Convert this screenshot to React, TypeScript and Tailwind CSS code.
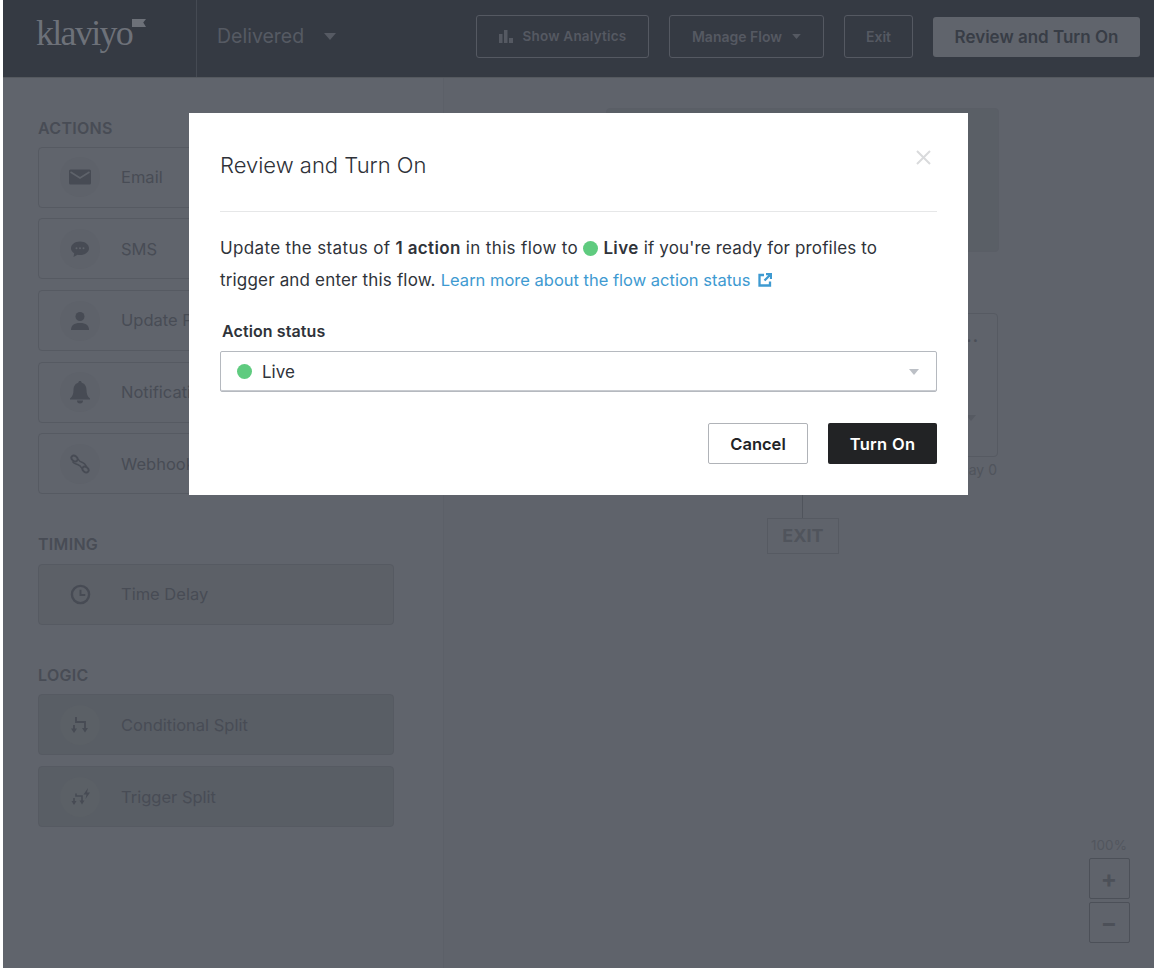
import React from "react";

function Mail() {
  return (
    <svg width="22" height="16" viewBox="0 0 22 16">
      <rect x="0" y="0.500" width="22" height="15" rx="1.500" fill="#474b54" />
      <path d="M1.500 3 L11 9 L20.500 3" fill="none" stroke="#5f636b" strokeWidth="1.600" />
    </svg>
  );
}
function Chat() {
  return (
    <svg width="20" height="20" viewBox="0 0 20 20">
      <path d="M10 2.500c5 0 9 2.900 9 6.800s-4 6.800-9 6.800c-.9 0-1.700-.1-2.500-.3L3.500 18l.7-3.700C2.200 13 1 11.300 1 9.300 1 5.400 5 2.500 10 2.500z" fill="#474b54" />
      <circle cx="6.500" cy="9.300" r="1" fill="#5f636b" />
      <circle cx="10" cy="9.300" r="1" fill="#5f636b" />
      <circle cx="13.500" cy="9.300" r="1" fill="#5f636b" />
    </svg>
  );
}
function User() {
  return (
    <svg width="20" height="20" viewBox="0 0 20 20">
      <circle cx="10" cy="5.500" r="4.500" fill="#474b54" />
      <path d="M1 19c0-4.500 3-7 9-7s9 2.500 9 7z" fill="#474b54" />
    </svg>
  );
}
function Bell() {
  return (
    <svg width="22" height="24" viewBox="0 0 22 24">
      <path d="M11 1c1 0 1.600.7 1.700 1.700C16 3.500 17.500 6.500 17.500 10c0 4 1 6.500 3.500 8.500v1H1v-1C3.500 16.500 4.500 14 4.500 10c0-3.500 1.500-6.500 4.800-7.300C9.400 1.700 10 1 11 1z" fill="#474b54" />
      <path d="M8 20.500h6a3 3 0 0 1-6 0z" fill="#474b54" />
    </svg>
  );
}
function Hook() {
  return (
    <svg width="20" height="20" viewBox="0 0 20 20" fill="none" stroke="#474b54" strokeWidth="1.900">
      <ellipse cx="4.500" cy="4.500" rx="3.400" ry="2.500" transform="rotate(40 4.500 4.500)" />
      <ellipse cx="15.500" cy="15.500" rx="3.400" ry="2.500" transform="rotate(40 15.500 15.500)" />
      <path d="M2.500 7.500c1 2 3 2.500 5 3s3.500 2 4.500 4M8 5c1 2 2.500 3 4.500 3.500s3 2 4 4" strokeWidth="1.500" />
    </svg>
  );
}
function ClockIcon() {
  return (
    <svg width="21" height="21" viewBox="0 0 22 22" fill="none" stroke="#474b54" strokeWidth="2.500">
      <circle cx="11" cy="11" r="9" />
      <path d="M11 6v5.500h5" strokeWidth="2" />
    </svg>
  );
}
function Split() {
  return (
    <svg width="18" height="16" viewBox="0 0 18 16" fill="none" stroke="#474b54" strokeWidth="1.800">
      <path d="M5 0v5h9v6.500M3 8v4.500" />
      <path d="M0 11.500L3 16 6 11.500zM11 11L14 15.500 17 11z" fill="#474b54" stroke="none" />
    </svg>
  );
}
function TriggerSplit() {
  return (
    <svg width="19" height="18" viewBox="0 0 19 18" fill="none" stroke="#474b54" strokeWidth="1.600">
      <path d="M5 5.500v2.500h6v5M3 10v3.500" />
      <path d="M0.500 13L3 17 5.500 13zM8.500 12.500L11 16.500 13.500 12.500z" fill="#474b54" stroke="none" />
      <path d="M17 0L12.500 6.500h3l-1 4.500 4.500-6.500h-3z" fill="#474b54" stroke="none" />
    </svg>
  );
}

function ActionCard({
  icon,
  label,
  cardClass,
  circleClass,
}: {
  icon: React.ReactNode;
  label: string;
  cardClass: string;
  circleClass: string;
}) {
  return (
    <div className={`flex h-[61px] w-[356px] items-center rounded-[4px] border border-[#565a62] pl-[21px] ${cardClass}`}>
      <div className={`flex h-10 w-10 items-center justify-center rounded-full ${circleClass}`}>{icon}</div>
      <span className="ml-[21px] text-[16.500px] text-[#484c55]">{label}</span>
    </div>
  );
}

function Heading({ children }: { children: React.ReactNode }) {
  return <div className="text-[16px] font-semibold leading-5 tracking-[0.300px] text-[#484c55]">{children}</div>;
}

function OutlineButton({ children, className }: { children: React.ReactNode; className: string }) {
  return (
    <div
      className={`flex h-[43px] items-center justify-center rounded-[3px] border border-[#555962] text-[14px] font-semibold text-[#555962] ${className}`}
    >
      {children}
    </div>
  );
}

function Caret({ color, w = 12, h = 7 }: { color: string; w?: number; h?: number }) {
  return (
    <svg width={w} height={h} viewBox="0 0 12 7">
      <path d="M0 0h12L6 7z" fill={color} />
    </svg>
  );
}

export default function App() {
  return (
    <div
      className="relative h-[970px] w-[1156px] overflow-hidden bg-white pb-[2px] pl-[3px] pr-[2px]"
      style={{ fontFamily: '"Inter", "Liberation Sans", sans-serif' }}
    >
      <div className="flex h-full flex-col bg-[#5f636b]">
        <header className="flex h-[78px] shrink-0 items-center border-b border-[#55595f] bg-[#353a43] pb-[4px]">
          <div className="-mb-[4px] flex h-[77px] w-[194px] items-start border-r border-[#454a53] pl-[33px] pt-[10px]">
            <span
              className="text-[36px] leading-[46px] tracking-[-1.700px] text-[#6d7179]"
              style={{ fontFamily: '"Liberation Serif", serif' }}
            >
              klaviyo
            </span>
            <svg width="14" height="8" viewBox="0 0 18 10" className="mt-[9px]">
              <path d="M0 0h18l-3.500 4.500L18 10H0z" fill="#6d7179" />
            </svg>
          </div>
          <div className="flex items-center gap-[20px] pl-[20px] text-[19.500px] text-[#565a63]">
            Delivered
            <Caret color="#565a63" />
          </div>
          <div className="ml-auto flex items-center gap-5 pr-[14px]">
            <OutlineButton className="w-[173px] gap-[10px]">
              <svg width="14" height="13" viewBox="0 0 14 13">
                <path d="M0 4h3.500v9H0zM5 0h3.500v13H5zM10 8h4v5h-4z" fill="#555962" />
              </svg>
              <span className="text-[13.500px] tracking-[0.200px]">Show Analytics</span>
            </OutlineButton>
            <OutlineButton className="w-[155px] gap-[10px]">
              Manage Flow
              <Caret color="#555962" w={9} h={5} />
            </OutlineButton>
            <OutlineButton className="w-[69px]">Exit</OutlineButton>
            <div className="flex h-[40px] w-[207px] items-center justify-center rounded-[3px] bg-[#60646c] pt-[2px] text-[17px] font-semibold text-[#383d46]">
              Review and Turn On
            </div>
          </div>
        </header>

        <div className="flex min-h-0 flex-1">
          <aside className="w-[441px] shrink-0 border-r border-[#5c6068] bg-[#60646c] pl-[35px] pt-[40px]">
            <Heading>ACTIONS</Heading>
            <div className="mt-[8.700px] flex flex-col gap-[10.700px]">
              <ActionCard icon={<Mail />} label="Email" cardClass="" circleClass="bg-[#5e626a]" />
              <ActionCard icon={<Chat />} label="SMS" cardClass="" circleClass="bg-[#5e626a]" />
              <ActionCard icon={<User />} label="Update Profile Property" cardClass="" circleClass="bg-[#5e626a]" />
              <ActionCard icon={<Bell />} label="Notification" cardClass="" circleClass="bg-[#5e626a]" />
              <ActionCard icon={<Hook />} label="Webhook" cardClass="" circleClass="bg-[#5e626a]" />
            </div>
            <div className="mt-[39.500px]">
              <Heading>TIMING</Heading>
            </div>
            <div className="mt-[10px]">
              <ActionCard icon={<ClockIcon />} label="Time Delay" cardClass="bg-[#5c6067]" circleClass="" />
            </div>
            <div className="mt-[40px]">
              <Heading>LOGIC</Heading>
            </div>
            <div className="mt-[9.500px] flex flex-col gap-[11px]">
              <ActionCard icon={<Split />} label="Conditional Split" cardClass="bg-[#595e65]" circleClass="bg-[#5b6066]" />
              <ActionCard icon={<TriggerSplit />} label="Trigger Split" cardClass="bg-[#595e65]" circleClass="bg-[#5b6066]" />
            </div>
          </aside>

          <main className="relative flex-1">
            <div className="absolute left-[162px] top-[30px] h-[144px] w-[393px] rounded-[4px] border border-[#5a5e66] bg-[#5a5f66]" />
            <div className="absolute left-[162px] top-[235px] h-[144px] w-[392px] rounded-[4px] border border-[#565a62] bg-[#5f636b]">
              <span className="absolute right-[18px] top-[14px] text-[16px] font-bold leading-4 tracking-[1px] text-[#4b4f58]">...</span>
              <div className="absolute right-[21px] top-[100px]">
                <Caret color="#565a62" w={10} h={8} />
              </div>
            </div>
            <div className="absolute right-[157px] top-[381px] text-[14px] text-[#50545c]">Day 0</div>
            <div className="absolute left-[358px] top-[379px] h-[62px] w-px bg-[#50545c]" />
            <div className="absolute left-[323px] top-[440px] flex h-[36px] w-[72px] items-center justify-center border border-[#565a62] pb-[1px] text-[18px] font-bold text-[#50545c]">
              EXIT
            </div>
            <div className="absolute right-[24px] top-[759px] flex w-[42px] flex-col items-center">
              <span className="text-[13.500px] leading-4 text-[#52565e]">100%</span>
              <div className="mt-[5px] flex h-[41px] w-[41px] items-center justify-center rounded-[2px] border-[1.500px] border-[#4c5058] text-[24px] font-bold leading-none text-[#4c5058]">
                +
              </div>
              <div className="mt-[3px] flex h-[41px] w-[41px] items-center justify-center rounded-[2px] border-[1.500px] border-[#4c5058] text-[24px] font-bold leading-none text-[#4c5058]">
                −
              </div>
            </div>
          </main>
        </div>
      </div>

      <div className="absolute left-[189px] top-[113px] h-[382px] w-[779px] bg-white px-[31px]">
        <svg
          className="absolute right-[37px] top-[37px]"
          width="15"
          height="15"
          viewBox="0 0 15 15"
          fill="none"
          stroke="#d9dadc"
          strokeWidth="2"
        >
          <path d="M1 1l13 13M14 1L1 14" />
        </svg>
        <h2 className="flex h-[99px] items-center border-b border-[#e6e7e8] pt-[6px] text-[22px] font-light text-[#2e3138]">
          Review and Turn On
        </h2>
        <p className="mt-[20px] text-[17px] leading-[32px] tracking-[0.350px] text-[#2f333a]">
          Update the status of <span className="font-semibold">1 action</span> in this flow to{" "}
          <span className="inline-block h-[15px] w-[15px] translate-y-[2px] rounded-full bg-[#5fcb7f]" />{" "}
          <span className="font-semibold">Live</span>{" "}
          <span className="tracking-[0.150px]">if you're ready for profiles to</span>
          <br />
          <span className="tracking-[0.170px]">trigger and enter this flow.</span>{" "}
          <span className="text-[16.500px] tracking-normal text-[#3e9ad1]">Learn more about the flow action status</span>
          <svg width="14" height="14" viewBox="0 0 14 14" className="ml-[7px] inline-block -translate-y-[1px]" fill="none" stroke="#3e9ad1" strokeWidth="2.300">
            <path d="M6 2H1.500v10.500H12V8.500M8 1h5v5M13 1L6.500 7.500" />
          </svg>
        </p>
        <div className="mt-[25px] pl-[2px] text-[16px] font-semibold leading-5 tracking-[0.100px] text-[#2f333a]">Action status</div>
        <div className="mt-[10px] flex h-[41px] items-center rounded-[2px] border border-[#b5b9bf] pl-[16px] pr-[17px] text-[17px] text-[#2f333a] shadow-[inset_0_-1px_0_#c8cbd0]">
          <span className="h-[15px] w-[15px] rounded-full bg-[#5fcb7f]" />
          <span className="ml-[10px] pt-[3px]">Live</span>
          <span className="ml-auto">
            <Caret color="#bcc0c6" w={10} h={6} />
          </span>
        </div>
        <div className="mt-[31px] flex justify-end gap-5">
          <div className="flex h-[41px] w-[100px] items-center justify-center rounded-[2px] border border-[#b0b3b8] pt-[1px] text-[16.500px] font-semibold text-[#222326]">
            Cancel
          </div>
          <div className="flex h-[41px] w-[109px] items-center justify-center rounded-[2px] bg-[#222325] pt-[1px] text-[16.500px] font-semibold tracking-[0.300px] text-white">
            Turn On
          </div>
        </div>
      </div>
    </div>
  );
}
